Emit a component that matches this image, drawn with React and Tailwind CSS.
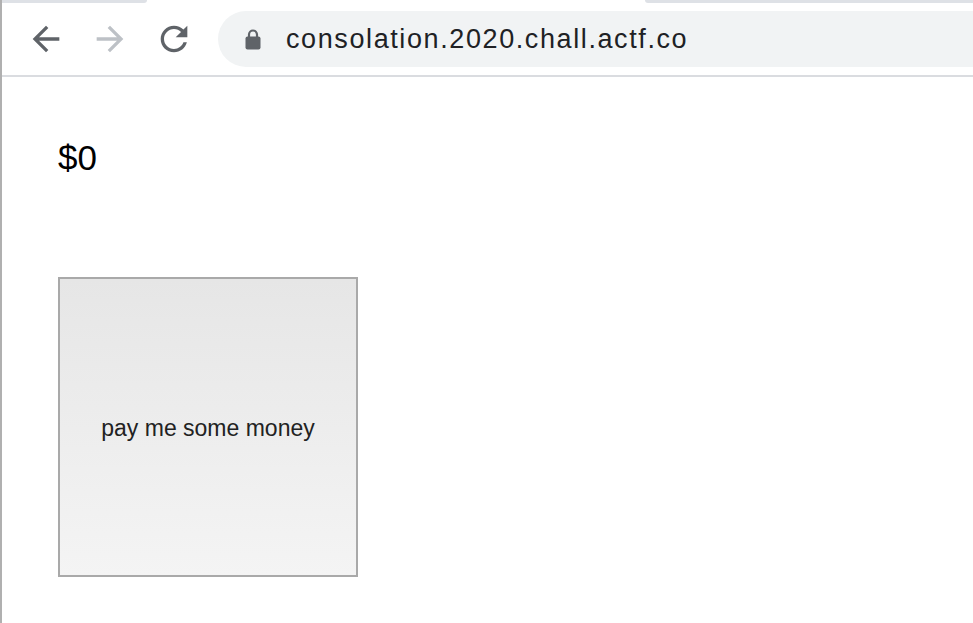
import React from "react";

const font = { fontFamily: '"Liberation Sans", Arial, sans-serif' };

function BackIcon({ color }) {
  return (
    <svg viewBox="0 0 24 24" className="w-[40px] h-[40px]" fill={color}>
      <path d="M20 11H7.83l5.59-5.59L12 4l-8 8 8 8 1.41-1.41L7.83 13H20v-2z" />
    </svg>
  );
}

function ForwardIcon({ color }) {
  return (
    <svg viewBox="0 0 24 24" className="w-[40px] h-[40px]" fill={color}>
      <path d="M4 11h12.17l-5.59-5.59L12 4l8 8-8 8-1.41-1.41L16.17 13H4v-2z" />
    </svg>
  );
}

function ReloadIcon() {
  return (
    <svg viewBox="0 0 24 24" className="w-[40px] h-[40px]" fill="#5f6368">
      <path d="M17.65 6.35C16.2 4.9 14.21 4 12 4c-4.42 0-7.99 3.58-7.99 8s3.57 8 7.99 8c3.73 0 6.84-2.55 7.73-6h-2.08c-.82 2.33-3.04 4-5.65 4-3.31 0-6-2.69-6-6s2.690-6 6-6c1.66 0 3.14.69 4.22 1.78L13 11h7V4l-2.35 2.35z" />
    </svg>
  );
}

function LockIcon() {
  return (
    <svg viewBox="0 0 16 22" className="w-[16px] h-[22px]">
      <path d="M4 9V6.5a4 4 0 0 1 8 0V9" fill="none" stroke="#5f6368" strokeWidth="2.2" />
      <rect x="0.5" y="8.5" width="15" height="13" rx="2" fill="#5f6368" />
    </svg>
  );
}

export default function App() {
  return (
    <div className="flex w-[973px] h-[623px] bg-white overflow-hidden" style={font}>
      {/* window edge */}
      <div className="w-[2px] h-full bg-[#b0b0b0]" />

      <div className="flex-1 flex flex-col">
        {/* tab strip remnant */}
        <div className="flex h-[3px]">
          <div className="w-[145px] bg-[#dee1e6] rounded-br-[6px]" />
          <div className="w-[498px] bg-white" />
          <div className="flex-1 bg-[#dee1e6] rounded-bl-[6px]" />
        </div>

        {/* toolbar */}
        <div className="h-[74px] flex items-center border-b-2 border-[#dadce0]">
          <div className="w-[64px] pl-[24px] flex items-center">
            <BackIcon color="#5f6368" />
          </div>
          <div className="w-[64px] pl-[24px] flex items-center">
            <ForwardIcon color="#bdc1c6" />
          </div>
          <div className="w-[64px] pl-[24px] flex items-center">
            <ReloadIcon />
          </div>
          <div className="ml-[24px] flex-1 h-[56px] bg-[#f1f3f4] rounded-l-full flex items-center pl-[27px]">
            <LockIcon />
            <span className="ml-[25px] text-[27px] tracking-[1.6px] text-[#202124]">
              consolation.2020.chall.actf.co
            </span>
          </div>
        </div>

        {/* page */}
        <div className="flex-1 pl-[56px]">
          <div className="mt-[63px] text-[35px] leading-none text-black">$0</div>
          <button
            className="mt-[102px] w-[300px] h-[300px] border-2 border-[#a9a9a9] bg-gradient-to-b from-[#e6e6e6] to-[#f4f4f4] text-[23px] text-[#222222] flex items-center justify-center pt-[2px]"
            style={font}
          >
            pay me some money
          </button>
        </div>
      </div>
    </div>
  );
}
